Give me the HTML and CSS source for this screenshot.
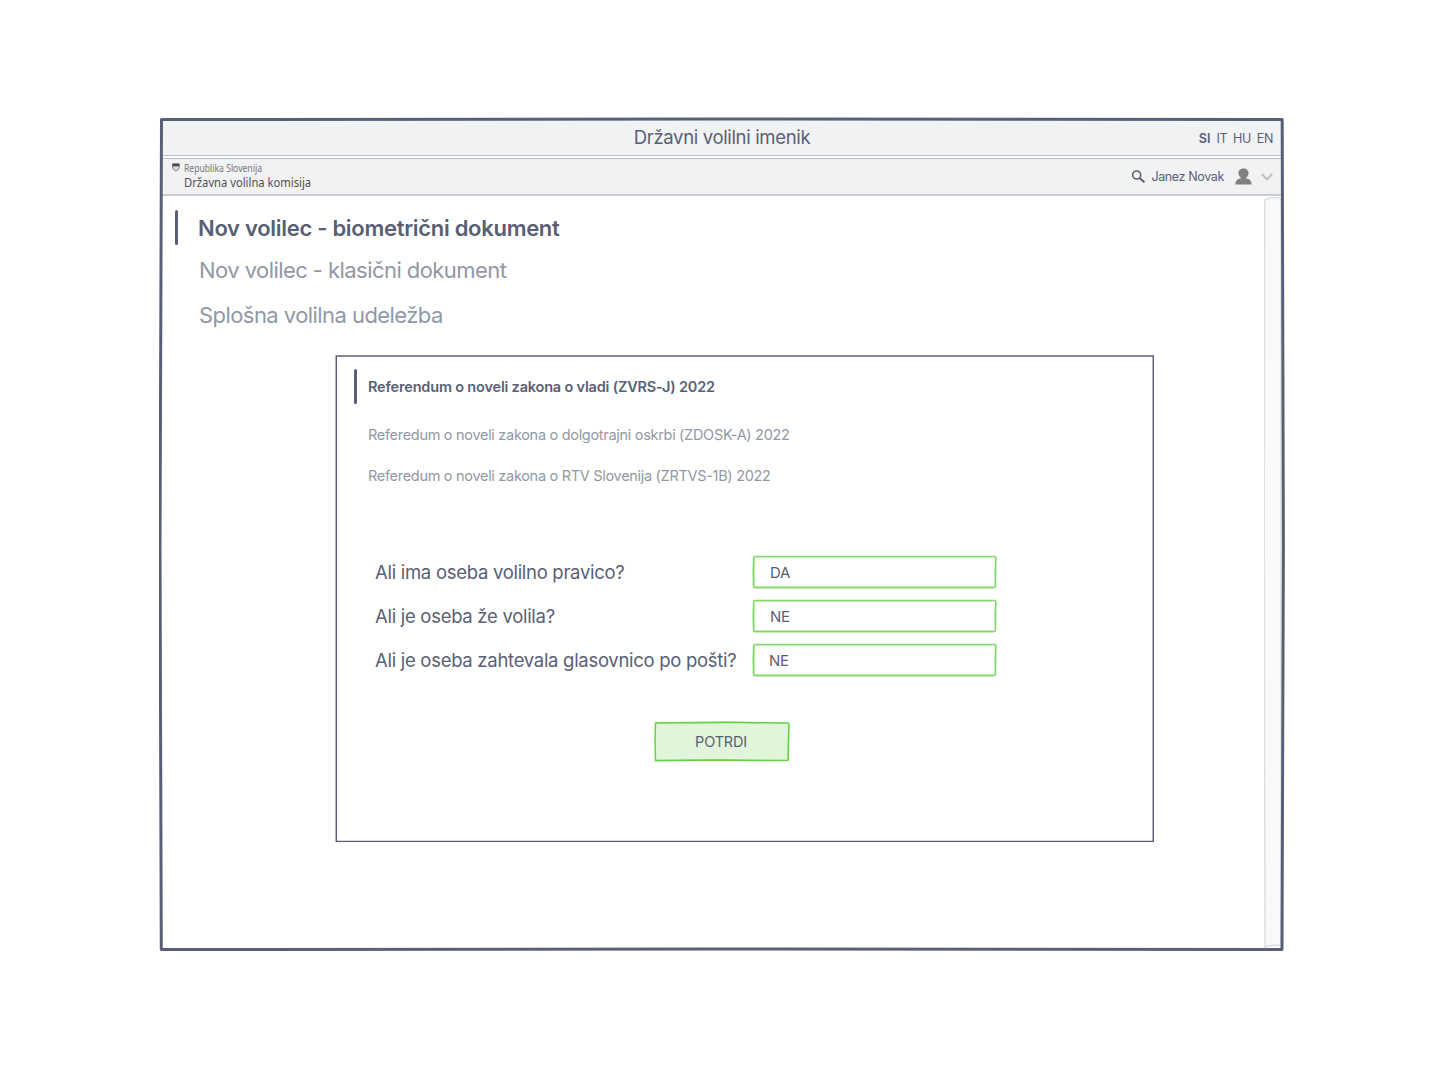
FILE: index.html
```html
<!DOCTYPE html>
<html lang="sl">
<head>
<meta charset="utf-8">
<title>Državni volilni imenik</title>
<link rel="stylesheet" href="styles.css">
</head>
<body>
<div class="window">
  <header class="titlebar">
    <h1 class="app-title">Državni volilni imenik</h1>
    <nav class="languages"><b>SI</b><span>IT</span><span>HU</span><span>EN</span></nav>
  </header>
  <div class="toolbar">
    <div class="brand">
      <svg class="crest" width="8" height="9" viewBox="0 0 8 9"><path d="M.6 1H7.2V4.6Q6.8 7 3.9 8.2Q1 7 .6 4.6Z" fill="#d4d5d7" stroke="#777" stroke-width=".8"/><path d="M.4.6H7.4V3.6H6L5 2.9 3.9 3.4 2.8 2.9 1.8 3.6H.4Z" fill="#4c4c4c"/></svg>
      <div class="brand-text"><span class="brand-small">Republika Slovenija</span><span class="brand-large">Državna volilna komisija</span></div>
    </div>
    <div class="account">
      <svg class="search" width="14" height="14" viewBox="0 0 14 14" fill="none" stroke="#596075"><circle cx="5.700" cy="5" r="4" stroke-width="1.600"/><path d="M8.700 8L13.400 12.300" stroke-width="1.900"/></svg>
      <span class="user">Janez Novak</span>
      <svg class="avatar" width="17" height="17" viewBox="0 0 17 17" fill="#808080"><path d="M8.500.4C11.400.4 13.600 2.200 13.600 5C13.600 6.800 12.600 8.600 11.200 9.700V10.400C14.500 10.900 16.600 12.500 16.600 16.500H.4C.4 12.500 2.500 10.900 5.800 10.400V9.700C4.400 8.600 3.400 6.800 3.400 5C3.400 2.200 5.600.4 8.500.4Z"/></svg>
      <svg class="chevron" width="12" height="8" viewBox="0 0 12 8" fill="none" stroke="#bdbdbd" stroke-width="1.900"><path d="M.8 1L6 6.300L11.200 1"/></svg>
    </div>
  </div>
  <div class="body">
    <main class="content">
      <ul class="menu">
        <li class="menu-item active">Nov volilec - biometrični dokument</li>
        <li class="menu-item">Nov volilec - klasični dokument</li>
        <li class="menu-item">Splošna volilna udeležba</li>
      </ul>
      <section class="panel">
        <svg class="outline" viewBox="0 0 819 487"><rect x="1.300" y="1" width="817" height="485.500" fill="none" stroke="#596075" stroke-width="1.500"/></svg>
        <ul class="votes">
          <li class="vote active">Referendum o noveli zakona o vladi (ZVRS-J) 2022</li>
          <li class="vote">Referedum o noveli zakona o dolgotrajni oskrbi (ZDOSK-A) 2022</li>
          <li class="vote">Referedum o noveli zakona o RTV Slovenija (ZRTVS-1B) 2022</li>
        </ul>
        <div class="questions">
          <span class="question">Ali ima oseba volilno pravico?</span>
          <div class="field"><svg class="outline" viewBox="0 0 245 34"><use href="#field-outline"/></svg><span>DA</span></div>
          <span class="question">Ali je oseba že volila?</span>
          <div class="field"><svg class="outline" viewBox="0 0 245 34"><use href="#field-outline"/></svg><span>NE</span></div>
          <span class="question">Ali je oseba zahtevala glasovnico po pošti?</span>
          <div class="field shifted"><svg class="outline" viewBox="0 0 245 34"><use href="#field-outline"/></svg><span>NE</span></div>
        </div>
        <button class="confirm" type="button">
          <svg class="outline" viewBox="0 0 136 41" stroke="#66d147" stroke-width="1.500" stroke-linecap="round" stroke-linejoin="round"><path d="M1.500 2L40 1.600 70 1.200 134 2Q135.600 2.800 134.800 8L134.200 39.200 98 39.600 67 39.100 1.500 39.800 1 20Z" fill="#e0f5da"/><path d="M2 1.600L45 1.900 76 1 104 1.900M134.900 6L134 24 134.200 38M1.700 39.300L40 38.800 98 38.900 133 39.700" fill="none" stroke-opacity=".4"/></svg>
          <span>POTRDI</span>
        </button>
      </section>
    </main>
    <div class="scrollbar"><svg class="outline" viewBox="0 0 18 753" preserveAspectRatio="none" fill="none" stroke="#dcdfe5" stroke-width="1.500"><path d="M.8 4Q9 -.2 17 2.500V750.500Q8 749.500 1 752L.2 320Z" fill="#f9f9f9"/></svg></div>
  </div>
  <svg class="frame" viewBox="0 0 1126 835" fill="none" stroke="#596075" stroke-linejoin="round"><path d="M2.500 2.600L560 2 1123.200 2.600 1124.400 430 1123 832.500 560 831.900 2.300 832.600 1 430Z" stroke-width="3"/></svg>
</div>
<svg class="defs" width="0" height="0"><defs><g id="field-outline" fill="none" stroke="#85d96b" stroke-linejoin="round"><path d="M2.500 1.500H242.500Q244 1.500 243.800 4L243.300 17 243.500 31Q243.400 32.600 241.500 32.600H3Q1.600 32.600 1.600 30L1.300 17 1.700 3.500Q1.700 1.500 2.500 1.500Z" stroke-width="1.700"/><path d="M4 2.200H240M243.200 5L244.100 17 243.200 29M2.300 5V28M3 31.700H241" stroke-opacity=".45"/></g></defs></svg>
</body>
</html>
```
FILE: styles.css
```css
* { box-sizing: border-box; }
body { margin: 0; background: #fff; color: #596075; font-family: Inter, "Liberation Sans", sans-serif; }
ul { list-style: none; margin: 0; padding: 0; }
li, span { white-space: nowrap; }
.window { position: relative; width: 1126px; height: 835px; margin: 117px 0 0 159px; padding: 3px 3px 4px; display: flex; flex-direction: column; }
.frame { position: absolute; inset: 0; width: 1126px; height: 835px; pointer-events: none; }
.defs { display: block; }
.outline { position: absolute; inset: 0; width: 100%; height: 100%; }

.titlebar { height: 36px; background: #f1f2f4; border-bottom: 1px solid #b9bdc9; display: grid; grid-template-columns: 1fr auto 1fr; align-items: center; }
.app-title { grid-column: 2; margin: 0; font-size: 18.500px; font-weight: 400; line-height: 33px; letter-spacing: -.34px; }
.languages { justify-self: end; display: flex; gap: 6px; padding: 1px 9px 0 0; font-size: 12.500px; letter-spacing: -.4px; }
.languages b { font-weight: 600; letter-spacing: 0; }
.toolbar { margin-top: 2px; height: 38px; background: #f1f2f4; border-top: 1px solid #b9bdc9; border-bottom: 2px solid #c6cad3; display: flex; justify-content: space-between; }
.brand { display: flex; gap: 4px; padding: 4px 0 0 10px; font-family: "Noto Sans", sans-serif; color: #505050; }
.brand-text { display: flex; flex-direction: column; }
.brand-small { font-size: 10px; line-height: 11px; color: #777; transform: scaleX(.86); }
.brand-large { font-size: 13px; line-height: 17px; transform: scaleX(.863); }
.brand-small, .brand-large { transform-origin: left; }
.account { display: flex; align-items: center; padding-right: 9px; font-size: 12.500px; }
.user { margin: 0 11px 0 6px; letter-spacing: -.36px; }
.chevron { margin-left: 9px; }

.body { flex: 1; display: flex; }
.content { flex: 1; padding-top: 14px; }
.scrollbar { position: relative; width: 18px; }
.menu-item { height: 45px; padding-left: 37px; font-size: 22px; line-height: 45px; letter-spacing: -.56px; color: #9198a5; }
.menu-item.active { display: flex; gap: 20px; height: 36px; margin-bottom: 2px; padding-left: 13px; color: #596075; font-weight: 600; line-height: 36px; letter-spacing: -.29px; }
.active::before { content: ""; width: 3px; height: 35px; border-radius: 2px; background: #596075; }
.panel { position: relative; width: 819px; height: 487px; margin: 17px 0 0 173px; padding: 14px 0 0 19px; display: flex; flex-direction: column; }
.vote { height: 41px; padding-left: 14px; font-size: 14.500px; line-height: 41px; letter-spacing: -.3px; color: #9198a5; }
.vote.active { display: flex; gap: 11px; height: 36px; margin-bottom: 9px; padding-left: 0; color: #596075; font-weight: 600; line-height: 36px; letter-spacing: -.18px; }
.questions { display: grid; grid-template-columns: 377px 245px; row-gap: 10px; margin: 59px 0 0 21px; align-items: center; }
.question { font-size: 18.500px; letter-spacing: -.29px; }
.field { position: relative; height: 34px; padding-left: 18px; font-size: 15px; line-height: 35px; }
.field.shifted { padding-left: 17px; }
.field span, .confirm span { position: relative; letter-spacing: -.2px; }
.confirm { position: relative; width: 136px; height: 41px; margin: 44px 0 0 300px; padding: 0 2px 0 0; border: 0; background: none; color: #596075; font: 400 14.500px/41px Inter, sans-serif; }
```
